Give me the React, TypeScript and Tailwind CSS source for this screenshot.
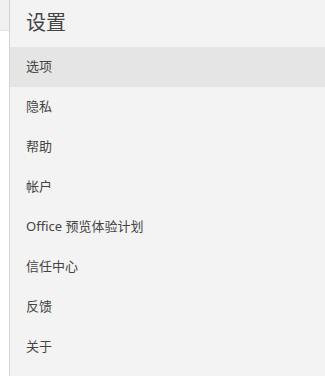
import React from "react";

const items = ["选项", "隐私", "帮助", "帐户", "Office 预览体验计划", "信任中心", "反馈", "关于"];

export default function App() {
  return (
    <div
      className="flex w-[325px] h-[376px] overflow-hidden"
      style={{ fontFamily: '"Segoe UI", "Noto Sans", "Noto Sans CJK SC", sans-serif' }}
    >
      <div className="w-[9px] flex flex-col shrink-0">
        <div className="h-[31px] bg-[#f0f0f0] border-b border-[#e3e3e3]" />
        <div className="flex-1 bg-white" />
      </div>
      <div className="w-px bg-[#d4d4d4] shrink-0" />
      <div className="flex-1 bg-[#f3f3f3] flex flex-col">
        <div className="h-[47px] pl-4 pt-[9px] text-[20px] leading-[28px] text-[#444444]">设置</div>
        {items.map((t, i) => (
          <div
            key={t}
            className={`h-10 flex items-center pl-4 text-[13px] text-[#444444] ${i === 0 ? "bg-[#e5e5e5]" : ""}`}
          >
            {t}
          </div>
        ))}
      </div>
    </div>
  );
}
